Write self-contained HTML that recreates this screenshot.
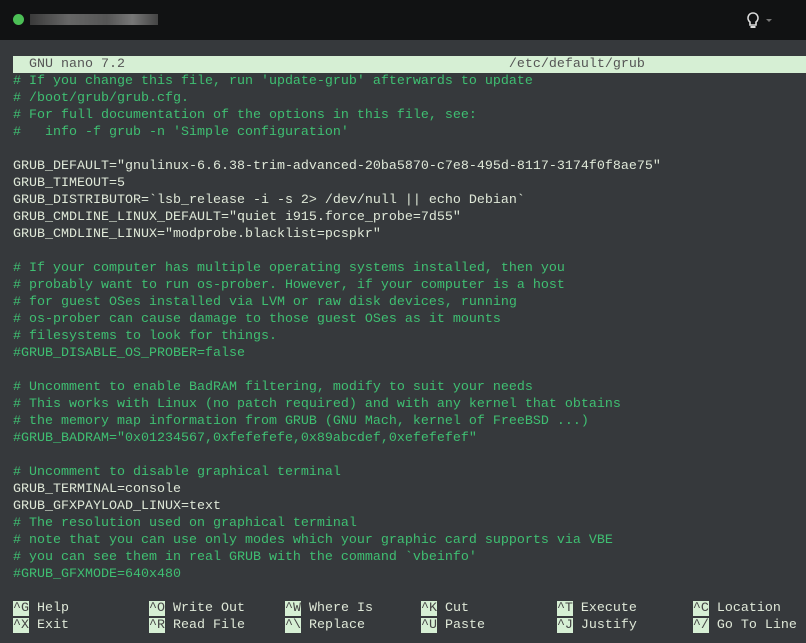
<!DOCTYPE html><html><head><style>
body{margin:0;width:806px;height:643px;background:#36393c;overflow:hidden;font-family:"Liberation Mono",monospace;}
#top{position:absolute;left:0;top:0;width:806px;height:40px;background:#111213;}
#dot{position:absolute;left:13px;top:14px;width:11px;height:11px;border-radius:50%;background:#4cbf56;}
#blur{position:absolute;left:30px;top:14px;width:128px;height:11px;background:linear-gradient(90deg,#3a3a3a,#666 30%,#555 60%,#777 80%,#444);}
#term{position:absolute;left:13px;top:56px;font-size:13.33px;line-height:17px;white-space:pre;color:#dfe8d8;}
.t{background:#d6efd4;color:#555;width:793px;display:block;}
.c{color:#3fbf72}
.k{background:#d6efd4;color:#444}
</style></head><body>
<div id="top"><div id="dot"></div><div id="blur"></div>
<svg style="position:absolute;left:746px;top:11px" width="30" height="18"><path d="M7 2a5 5 0 0 0-3 9v3h6v-3a5 5 0 0 0-3-9z" fill="none" stroke="#ddd" stroke-width="1.6"/><rect x="4.5" y="15" width="5" height="2" fill="#ddd"/><path d="M20 8h6l-3 3z" fill="#777"/></svg></div>
<div id="term"><span class="t">  GNU nano 7.2                                                /etc/default/grub</span><span class="c"># If you change this file, run 'update-grub' afterwards to update
# /boot/grub/grub.cfg.
# For full documentation of the options in this file, see:
#   info -f grub -n 'Simple configuration'</span>

GRUB_DEFAULT="gnulinux-6.6.38-trim-advanced-20ba5870-c7e8-495d-8117-3174f0f8ae75"
GRUB_TIMEOUT=5
GRUB_DISTRIBUTOR=`lsb_release -i -s 2> /dev/null || echo Debian`
GRUB_CMDLINE_LINUX_DEFAULT="quiet i915.force_probe=7d55"
GRUB_CMDLINE_LINUX="modprobe.blacklist=pcspkr"

<span class="c"># If your computer has multiple operating systems installed, then you
# probably want to run os-prober. However, if your computer is a host
# for guest OSes installed via LVM or raw disk devices, running
# os-prober can cause damage to those guest OSes as it mounts
# filesystems to look for things.
#GRUB_DISABLE_OS_PROBER=false

# Uncomment to enable BadRAM filtering, modify to suit your needs
# This works with Linux (no patch required) and with any kernel that obtains
# the memory map information from GRUB (GNU Mach, kernel of FreeBSD ...)
#GRUB_BADRAM="0x01234567,0xfefefefe,0x89abcdef,0xefefefef"

# Uncomment to disable graphical terminal</span>
GRUB_TERMINAL=console
GRUB_GFXPAYLOAD_LINUX=text
<span class="c"># The resolution used on graphical terminal
# note that you can use only modes which your graphic card supports via VBE
# you can see them in real GRUB with the command `vbeinfo'
#GRUB_GFXMODE=640x480</span>
</div>
<div id="term" style="top:600px"><span class="k">^G</span> Help          <span class="k">^O</span> Write Out     <span class="k">^W</span> Where Is      <span class="k">^K</span> Cut           <span class="k">^T</span> Execute       <span class="k">^C</span> Location
<span class="k">^X</span> Exit          <span class="k">^R</span> Read File     <span class="k">^\</span> Replace       <span class="k">^U</span> Paste         <span class="k">^J</span> Justify       <span class="k">^/</span> Go To Line</div>
</body></html>
